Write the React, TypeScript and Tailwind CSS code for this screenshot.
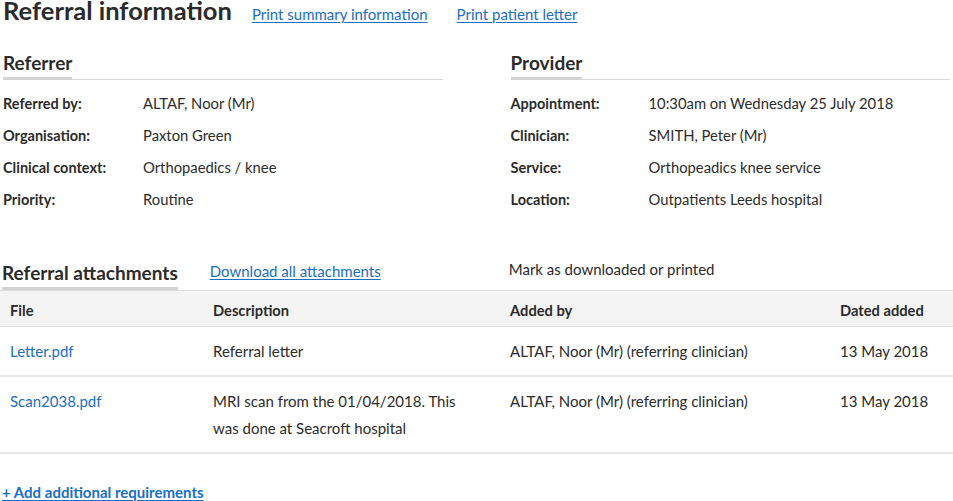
import React from 'react';

const font = { fontFamily: 'Lato, "Noto Sans", sans-serif' };

type Row = { label: string; value: string };

const referrer: Row[] = [
  { label: 'Referred by:', value: 'ALTAF, Noor (Mr)' },
  { label: 'Organisation:', value: 'Paxton Green' },
  { label: 'Clinical context:', value: 'Orthopaedics / knee' },
  { label: 'Priority:', value: 'Routine' },
];

const provider: Row[] = [
  { label: 'Appointment:', value: '10:30am on Wednesday 25 July 2018' },
  { label: 'Clinician:', value: 'SMITH, Peter (Mr)' },
  { label: 'Service:', value: 'Orthopeadics knee service' },
  { label: 'Location:', value: 'Outpatients Leeds hospital' },
];

const files = [
  { file: 'Letter.pdf', desc: 'Referral letter', by: 'ALTAF, Noor (Mr) (referring clinician)', date: '13 May 2018' },
  {
    file: 'Scan2038.pdf',
    desc: 'MRI scan from the 01/04/2018. This was done at Seacroft hospital',
    by: 'ALTAF, Noor (Mr) (referring clinician)',
    date: '13 May 2018',
  },
];

const SectionHeading = ({ title }: { title: string }) => (
  <div className="border-b border-[#d8d8d8]">
    <h2 className="-mb-px inline-block border-b-[3px] border-[#d2d2d2] pb-[3px] text-[19px] font-bold leading-[22px] text-[#2b2b2b]">
      {title}
    </h2>
  </div>
);

const DetailList = ({ title, rows, labelWidth }: { title: string; rows: Row[]; labelWidth: string }) => (
  <section className="w-[440px]">
    <SectionHeading title={title} />
    <dl className="mt-[8px]">
      {rows.map((r) => (
        <div key={r.label} className="flex h-[32px] items-center text-[#2b2b2b]">
          <dt className={`${labelWidth} text-[14.5px] font-bold`}>{r.label}</dt>
          <dd className="text-[14.8px]">{r.value}</dd>
        </div>
      ))}
    </dl>
  </section>
);

export default function App() {
  return (
    <div className="min-h-screen bg-white text-[#2b2b2b]" style={font}>
      <div className="-mt-[2px] flex items-baseline px-[3px]">
        <h1 className="text-[25.5px] font-bold leading-[25px]">Referral information</h1>
        <a href="#" className="ml-[20px] text-[15px] text-[#1a6ec4] underline underline-offset-2">
          Print summary information
        </a>
        <a href="#" className="ml-[29px] text-[15px] text-[#1a6ec4] underline underline-offset-2">
          Print patient letter
        </a>
      </div>

      <div className="mt-[26px] flex gap-[68px] px-[3px]">
        <DetailList title="Referrer" rows={referrer} labelWidth="w-[140px]" />
        <DetailList title="Provider" rows={provider} labelWidth="w-[138px]" />
      </div>

      <div className="mt-[42px] flex items-end">
        <h2 className="ml-[2px] border-b-[3px] border-[#d2d2d2] pb-[3px] text-[19px] font-bold leading-[22px]">
          Referral attachments
        </h2>
        <a href="#" className="mb-[8px] ml-[32px] text-[15px] text-[#1a6ec4] underline underline-offset-2">
          Download all attachments
        </a>
        <span className="mb-[10px] ml-[128px] text-[15px]">Mark as downloaded or printed</span>
      </div>

      <table className="w-full border-collapse text-left text-[15px]">
        <thead>
          <tr className="border-y border-[#dedede] bg-[#f4f4f4] text-[14.7px]">
            <th className="h-[36px] w-[203px] px-[10px] pt-[4px] font-bold">File</th>
            <th className="w-[297px] px-[10px] pt-[4px] font-bold">Description</th>
            <th className="w-[330px] px-[10px] pt-[4px] font-bold">Added by</th>
            <th className="px-[10px] pt-[4px] font-bold">Dated added</th>
          </tr>
        </thead>
        <tbody>
          {files.map((f) => (
            <tr key={f.file} className="border-b-2 border-[#e8e8e8] align-top leading-[27px]">
              <td className="px-[10px] pb-[10px] pt-[11px]">
                <a href="#" className="text-[#1a6ec4]">{f.file}</a>
              </td>
              <td className="px-[10px] pb-[10px] pt-[11px]">
                <div className="max-w-[250px]">{f.desc}</div>
              </td>
              <td className="px-[10px] pb-[10px] pt-[11px]">{f.by}</td>
              <td className="px-[10px] pb-[10px] pt-[11px]">{f.date}</td>
            </tr>
          ))}
        </tbody>
      </table>

      <a href="#" className="ml-[2px] mt-[27px] inline-block text-[15px] font-bold text-[#1a6ec4] underline underline-offset-2">
        + Add additional requirements
      </a>
    </div>
  );
}
